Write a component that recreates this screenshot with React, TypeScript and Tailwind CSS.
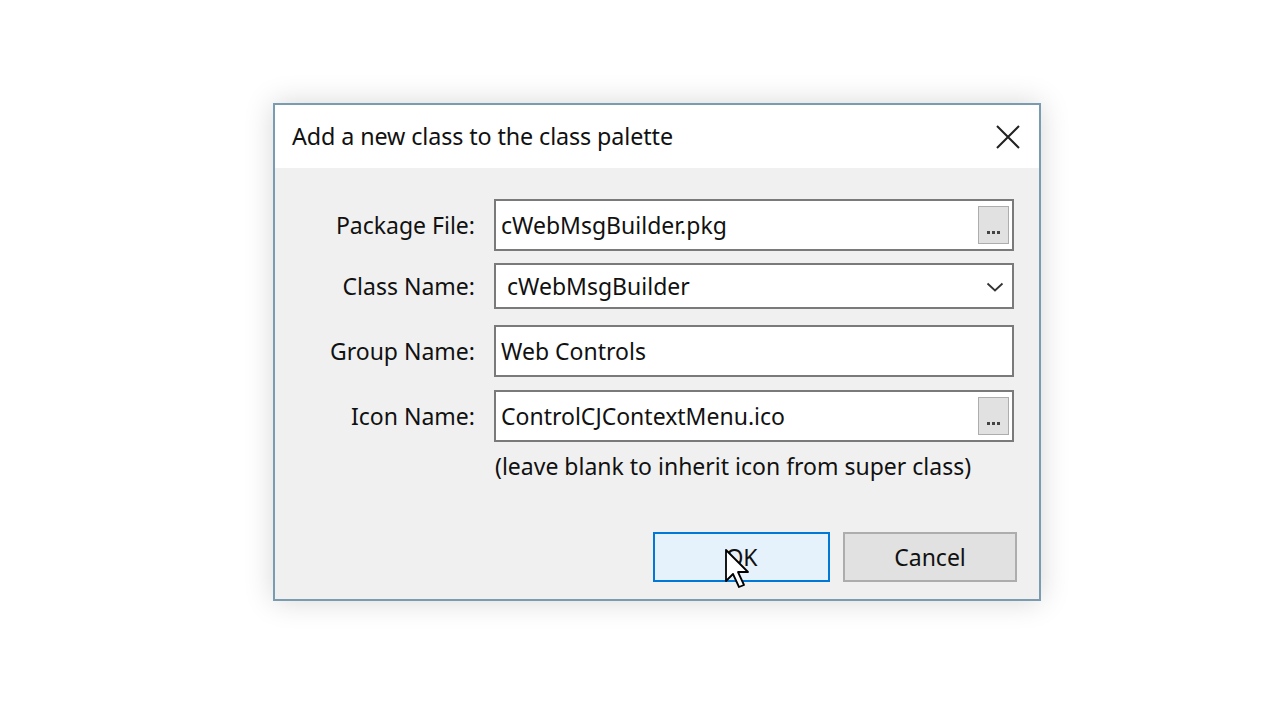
import React from "react";

const font = { fontFamily: '"Noto Sans", "Open Sans", sans-serif' };

function Ellipsis() {
  return (
    <div className="absolute right-[3px] top-[5px] bottom-[5px] w-[31px] bg-[#e1e1e1] border border-[#adadad] flex items-end justify-center pb-[9px]">
      <div className="flex gap-[2px]">
        <span className="w-[3px] h-[3px] bg-[#444]" />
        <span className="w-[3px] h-[3px] bg-[#444]" />
        <span className="w-[3px] h-[3px] bg-[#444]" />
      </div>
    </div>
  );
}

export default function App() {
  return (
    <div className="w-[1280px] h-[720px] bg-white overflow-hidden pt-[103px] pl-[273px] relative" style={font}>
      <div className="w-[768px] h-[498px] border-2 border-[#7b9bb0] bg-[#f0f0f0] flex flex-col shadow-[0_0_28px_rgba(0,0,0,0.16)] text-[#111]">
        <div className="h-[63px] bg-white flex items-center justify-between pl-[17px] pr-[18px]">
          <span className="text-[23.3px] tracking-[-0.1px]">Add a new class to the class palette</span>
          <svg width="26" height="26" viewBox="0 0 26 26">
            <path d="M2 2 L24 24 M24 2 L2 24" stroke="#222" strokeWidth="2" />
          </svg>
        </div>
        <div className="flex-1 flex flex-col pt-[31px] pr-[22px]">
          <div className="grid grid-cols-[200px_520px] gap-x-[19px] items-center text-[23px]">
            <div className="text-right">Package File:</div>
            <div className="relative h-[52px] bg-white border-2 border-[#7a7a7a] flex items-center pl-[5px]">
              cWebMsgBuilder.pkg
              <Ellipsis />
            </div>

            <div className="text-right mt-[12px]">Class Name:</div>
            <div className="relative h-[46px] mt-[12px] bg-white border-2 border-[#7a7a7a] flex items-center pl-[11px]">
              cWebMsgBuilder
              <svg className="absolute right-[8px] top-[16px]" width="18" height="12" viewBox="0 0 18 12">
                <path d="M1.5 2.5 L9 9.5 L16.5 2.5" stroke="#333" strokeWidth="1.8" fill="none" />
              </svg>
            </div>

            <div className="text-right mt-[16px]">Group Name:</div>
            <div className="relative h-[52px] mt-[16px] bg-white border-2 border-[#7a7a7a] flex items-center pl-[5px]">
              Web Controls
            </div>

            <div className="text-right mt-[13px]">Icon Name:</div>
            <div className="relative h-[52px] mt-[13px] bg-white border-2 border-[#7a7a7a] flex items-center pl-[5px]">
              ControlCJContextMenu.ico
              <Ellipsis />
            </div>

            <div />
            <div className="mt-[7px] pl-[1px]">(leave blank to inherit icon from super class)</div>
          </div>
          <div className="flex justify-end gap-[13px] mt-auto mb-[17px]">
            <button className="w-[177px] h-[50px] bg-[#e5f1fb] border-2 border-[#0078d7] text-[23px] text-[#111]">OK</button>
            <button className="w-[174px] h-[50px] bg-[#e1e1e1] border-2 border-[#adadad] text-[23px] text-[#111]">Cancel</button>
          </div>
        </div>
      </div>
      <svg className="absolute left-[724px] top-[548px]" width="28" height="44" viewBox="0 0 28 44">
        <path d="M2 2 L2 33 L9 26 L15 39 L20 37 L14 24 L24 24 Z" fill="white" stroke="black" strokeWidth="1.8" strokeLinejoin="round" />
      </svg>
    </div>
  );
}
